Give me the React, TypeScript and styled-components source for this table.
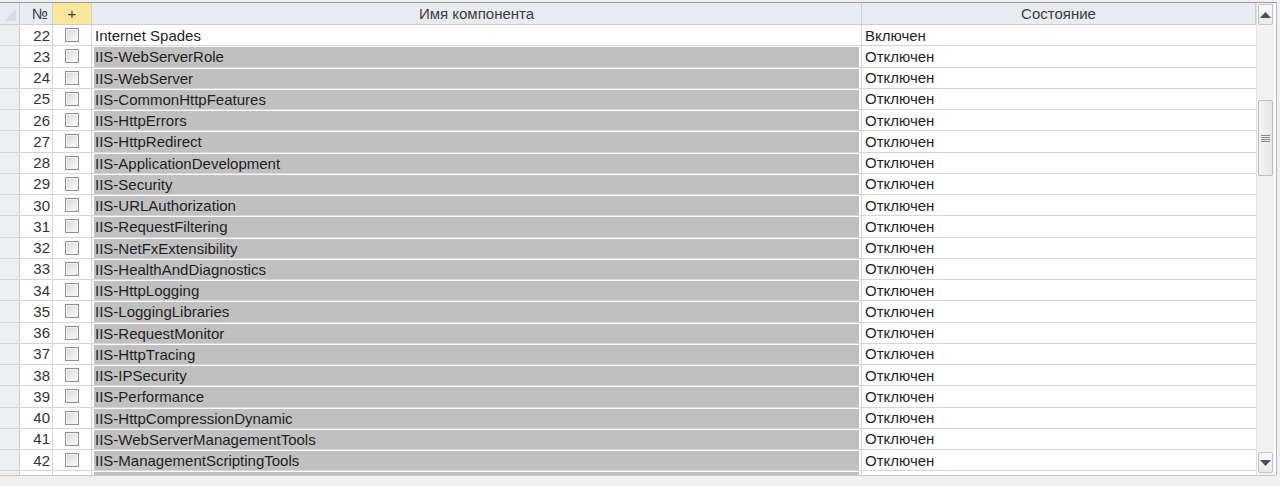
import React from "react";
import styled, { createGlobalStyle } from "styled-components";

const Global = createGlobalStyle`
  html, body { margin: 0; padding: 0; background: #f0f0f0; }
  body { font-family: "Liberation Sans", Arial, sans-serif; overflow: hidden; }
`;

const rows: { n: number | null; name: string; state: string; hl: boolean }[] = [
  { n: 22, name: "Internet Spades", state: "Включен", hl: false },
  ...[
    "IIS-WebServerRole",
    "IIS-WebServer",
    "IIS-CommonHttpFeatures",
    "IIS-HttpErrors",
    "IIS-HttpRedirect",
    "IIS-ApplicationDevelopment",
    "IIS-Security",
    "IIS-URLAuthorization",
    "IIS-RequestFiltering",
    "IIS-NetFxExtensibility",
    "IIS-HealthAndDiagnostics",
    "IIS-HttpLogging",
    "IIS-LoggingLibraries",
    "IIS-RequestMonitor",
    "IIS-HttpTracing",
    "IIS-IPSecurity",
    "IIS-Performance",
    "IIS-HttpCompressionDynamic",
    "IIS-WebServerManagementTools",
    "IIS-ManagementScriptingTools",
  ].map((name, i) => ({ n: 23 + i, name, state: "Отключен", hl: true })),
  { n: null, name: "", state: "", hl: true },
];

const COLS = "20px 33px 39px 770px 394px";

const Page = styled.div`
  padding-top: 2px;
  height: 484px;
  display: flex;
  flex-direction: column;
`;

const Frame = styled.div`
  width: 1276px;
  border-top: 1px solid #9c9c9c;
  border-right: 1px solid #b8b8b8;
  background: #ffffff;
  display: flex;
  height: 472px;
  overflow: hidden;
`;

const Grid = styled.div`
  width: 1256px;
  display: flex;
  flex-direction: column;
  overflow: hidden;
`;

const HeaderRow = styled.div`
  display: grid;
  grid-template-columns: ${COLS};
  height: 22px;
  background: #e8ebef;
  border-bottom: 1px solid #c9ced6;
  box-sizing: border-box;
  flex: none;
`;

const HeadCell = styled.div<{ $yellow?: boolean; $align?: string }>`
  display: flex;
  align-items: center;
  justify-content: ${(p) => p.$align ?? "center"};
  padding-right: ${(p) => (p.$align === "flex-end" ? "4px" : "0")};
  font-size: 15px;
  color: #3c3c3c;
  border-right: 1px solid #c9ced6;
  background: ${(p) => (p.$yellow ? "#fbe69c" : "transparent")};
  box-sizing: border-box;
`;

const Corner = styled.div`
  display: flex;
  align-items: flex-end;
  justify-content: flex-end;
  padding: 0 3px 3px 0;
  background: #e8ebef;
  border-right: 1px solid #c9ced6;
  box-sizing: border-box;
`;

const Row = styled.div`
  display: grid;
  grid-template-columns: ${COLS};
  height: 21.25px;
  flex: none;
  box-sizing: border-box;
  border-bottom: 1px solid #d6d6d6;
`;

const Selector = styled.div`
  background: #eceef1;
  border-right: 1px solid #c9ced6;
`;

const NumCell = styled.div`
  display: flex;
  align-items: center;
  justify-content: flex-end;
  padding-right: 2px;
  font-size: 15px;
  color: #333;
  border-right: 1px solid #d6d6d6;
`;

const CheckCell = styled.div`
  display: flex;
  align-items: center;
  justify-content: center;
  border-right: 1px solid #d6d6d6;
`;

const Box = styled.span`
  width: 12px;
  height: 12px;
  border: 1px solid #8f8f8f;
  background: linear-gradient(135deg, #d6d6d6 0%, #eeeeee 60%, #fdfdfd 100%);
  box-shadow: inset 0 0 0 1px #f3f3f3;
`;

const NameCell = styled.div`
  display: flex;
  padding: 1px 2px 0 2px;
  border-right: 1px solid #d6d6d6;
  min-width: 0;
`;

const NameFill = styled.div<{ $hl: boolean }>`
  flex: 1;
  display: flex;
  align-items: center;
  padding-left: 1px;
  background: ${(p) => (p.$hl ? "#c0c0c0" : "transparent")};
  font-size: 15px;
  color: #1f1f1f;
  white-space: nowrap;
  overflow: hidden;
`;

const StateCell = styled.div`
  display: flex;
  align-items: center;
  padding-left: 3px;
  font-size: 15px;
  color: #1f1f1f;
  white-space: nowrap;
`;

const ScrollBar = styled.div`
  width: 18px;
  background: #f2f2f2;
  border-left: 1px solid #e2e2e2;
  display: flex;
  flex-direction: column;
  padding: 1px 1px 0 1px;
  box-sizing: border-box;
`;

const ArrowBtn = styled.div<{ $bottom?: boolean }>`
  height: 19px;
  margin-bottom: ${(p) => (p.$bottom ? "2px" : "0")};
  border: 1px solid #c4c4c4;
  border-radius: 2px;
  background: linear-gradient(#fafafa, #e9e9e9);
  display: flex;
  align-items: center;
  justify-content: center;
  flex: none;
`;

const Track = styled.div`
  flex: 1;
  display: flex;
  flex-direction: column;
  padding-top: 75px;
`;

const Thumb = styled.div`
  height: 74px;
  border: 1px solid #bdbdbd;
  border-radius: 2px;
  background: linear-gradient(90deg, #f4f4f4, #e6e6e6);
  display: flex;
  flex-direction: column;
  align-items: center;
  justify-content: center;
  gap: 1px;
`;

const Grip = styled.span`
  width: 9px;
  height: 1px;
  background: #8a8a8a;
`;

const Footer = styled.div`
  width: 1276px;
  flex: 1;
  border-top: 1px solid #c8c8c8;
  background: #f0f0f0;
`;

const Arrow = ({ up }: { up: boolean }) => (
  <svg width="11" height="6" viewBox="0 0 11 6">
    <path d={up ? "M0 6 L5.5 0 L11 6 Z" : "M0 0 L5.5 6 L11 0 Z"} fill="#3f4f6e" />
  </svg>
);

export default function App() {
  return (
    <>
      <Global />
      <Page>
        <Frame>
          <Grid>
            <HeaderRow>
              <Corner>
                <svg width="12" height="12" viewBox="0 0 12 12">
                  <path d="M12 0 L12 12 L0 12 Z" fill="#d7dbe0" />
                </svg>
              </Corner>
              <HeadCell $align="flex-end">№</HeadCell>
              <HeadCell $yellow>+</HeadCell>
              <HeadCell>Имя компонента</HeadCell>
              <HeadCell>Состояние</HeadCell>
            </HeaderRow>
            {rows.map((r, i) => (
              <Row key={i}>
                <Selector />
                <NumCell>{r.n}</NumCell>
                <CheckCell>{r.n !== null && <Box />}</CheckCell>
                <NameCell>
                  <NameFill $hl={r.hl}>{r.name}</NameFill>
                </NameCell>
                <StateCell>{r.state}</StateCell>
              </Row>
            ))}
          </Grid>
          <ScrollBar>
            <ArrowBtn>
              <Arrow up />
            </ArrowBtn>
            <Track>
              <Thumb>
                <Grip />
                <Grip />
                <Grip />
                <Grip />
              </Thumb>
            </Track>
            <ArrowBtn $bottom>
              <Arrow up={false} />
            </ArrowBtn>
          </ScrollBar>
        </Frame>
        <Footer />
      </Page>
    </>
  );
}
